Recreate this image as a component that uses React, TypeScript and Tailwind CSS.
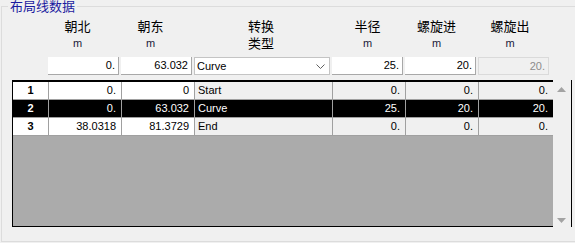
import React from 'react';

const FONT = { fontFamily: '"Liberation Sans", "Noto Sans CJK SC", sans-serif' };

const cols = [
  { w: 'w-[73px]', hpad: 'pr-[14px]', name: ['朝北'], unit: 'm' },
  { w: 'w-[73px]', hpad: 'pr-[14px]', name: ['朝东'], unit: 'm' },
  { w: 'w-[138px]', hpad: 'pr-[4px]', name: ['转换', '类型'], unit: '' },
  { w: 'w-[73px]', hpad: 'pr-[2px]', name: ['半径'], unit: 'm' },
  { w: 'w-[73px]', hpad: 'pr-[10px]', name: ['螺旋进'], unit: 'm' },
  { w: 'w-[74px]', hpad: 'pr-[10px]', name: ['螺旋出'], unit: 'm' },
];

const rows = [
  { n: '1', v: ['0.', '0', 'Start', '0.', '0.', '0.'], sel: false },
  { n: '2', v: ['0.', '63.032', 'Curve', '25.', '20.', '20.'], sel: true },
  { n: '3', v: ['38.0318', '81.3729', 'End', '0.', '0.', '0.'], sel: false },
];

const cellW = ['w-[73px]', 'w-[73px]', 'w-[138px]', 'w-[73px]', 'w-[73px]', 'w-[74px]'];

export default function App() {
  return (
    <div className="w-[575px] h-[243px] bg-[#f0f0f0] overflow-hidden text-black" style={FONT}>
      <div className="relative mt-[6px] ml-[1px] w-[590px] h-[236px] border border-[#dcdcdc]">
        <div className="absolute -top-[7px] left-[6px] px-[2px] bg-[#f0f0f0] text-[13px] leading-[14px] text-[#1c1ca0]">
          布局线数据
        </div>

        {/* headers */}
        <div className="flex ml-[46px] pt-[11px]">
          {cols.map((c) => (
            <div key={c.name.join('')} className={`${c.w} ${c.hpad} flex flex-col items-center`}>
              <div className="text-[13px] leading-[17px]">{c.name[0]}</div>
              {c.name[1] ? (
                <div className="text-[13px] leading-[17px]">{c.name[1]}</div>
              ) : (
                <div className="text-[11px] leading-[17px] text-[#20203a]">{c.unit}</div>
              )}
            </div>
          ))}
        </div>

        {/* edit row */}
        <div className="flex ml-[46px] mt-[5px] h-[18px] text-[11px]">
          <div className="w-[71px] mr-[2px] bg-white border-b border-r border-[#a8a8a8] flex items-center justify-end pr-[3px]">0.</div>
          <div className="w-[71px] mr-[2px] bg-white border-b border-r border-[#a8a8a8] flex items-center justify-end pr-[3px]">63.032</div>
          <div className="w-[136px] mr-[2px] bg-white border border-[#c4c4c4] flex items-center justify-between pl-[2px] pr-[4px]">
            <span>Curve</span>
            <svg width="9" height="5" viewBox="0 0 9 5">
              <polyline points="0.5,0.5 4.5,4.5 8.5,0.5" fill="none" stroke="#606060" strokeWidth="1" />
            </svg>
          </div>
          <div className="w-[71px] mr-[2px] bg-white border-b border-r border-[#a8a8a8] flex items-center justify-end pr-[3px]">25.</div>
          <div className="w-[71px] mr-[2px] bg-white border-b border-r border-[#a8a8a8] flex items-center justify-end pr-[3px]">20.</div>
          <div className="w-[71px] bg-[#f0f0f0] border border-[#dadada] flex items-center justify-end pr-[3px] text-[#8c8c8c]">20.</div>
        </div>

        {/* grid */}
        <div className="flex ml-[10px] mt-[5px] h-[147px]">
          <div className="w-[541px] h-full bg-[#ababab] border-l border-t-2 border-b border-black text-[11px]">
            {rows.map((r) => (
              <div
                key={r.n}
                className={`flex h-[18px] border-b border-[#a0a0a0] ${r.sel ? 'bg-black text-white' : ''}`}
              >
                <div className={`w-[36px] border-r border-[#a0a0a0] flex items-center justify-center font-bold ${r.sel ? '' : 'bg-white'}`}>
                  {r.n}
                </div>
                {r.v.map((v, i) => (
                  <div
                    key={i}
                    className={`${cellW[i]} ${i < 5 ? 'border-r border-[#a0a0a0]' : ''} flex items-center ${
                      i === 2 ? 'justify-start pl-[3px]' : 'justify-end pr-[5px]'
                    } ${r.sel ? '' : i < 2 ? 'bg-white' : 'bg-[#f0f0f0]'}`}
                  >
                    {v}
                  </div>
                ))}
              </div>
            ))}
          </div>
          <div className="w-[19px] h-full bg-[#f0f0f0] border-r border-black flex flex-col items-center justify-between pt-[7px] pb-[4px] pr-[1px]">
            <svg width="9" height="5" viewBox="0 0 9 5">
              <polygon points="0,5 4.5,0 9,5" fill="#a3a3a3" />
            </svg>
            <svg width="9" height="5" viewBox="0 0 9 5">
              <polygon points="0,0 9,0 4.5,5" fill="#a3a3a3" />
            </svg>
          </div>
        </div>
      </div>
    </div>
  );
}
